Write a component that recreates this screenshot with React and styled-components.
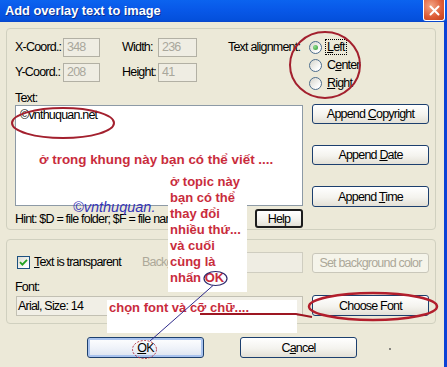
import React from "react";
import styled, { createGlobalStyle } from "styled-components";

const GlobalStyle = createGlobalStyle`
  html, body {
    margin: 0;
    padding: 0;
    background: #ece9d8;
  }
  body {
    font-family: "Liberation Sans", Arial, sans-serif;
  }
`;

const Window = styled.div`
  position: relative;
  width: 447px;
  height: 367px;
  overflow: hidden;
  background: #ece9d8;
  display: flex;
  flex-direction: column;
  font-size: 12.5px;
  letter-spacing: -0.8px;
  color: #000;
`;

const TitleBar = styled.div`
  height: 22px;
  flex-shrink: 0;
  display: flex;
  align-items: flex-start;
  justify-content: space-between;
  padding-left: 5px;
  background: linear-gradient(#0b63ef 0%, #0858e8 45%, #0450dc 90%, #0a46c8 100%);
`;

const TitleText = styled.div`
  font: bold 12.8px "Liberation Sans", Arial, sans-serif;
  letter-spacing: 0;
  line-height: 21px;
  color: #fff;
  text-shadow: 1px 1px 0 #0a2f8f;
`;

const CloseButton = styled.div`
  box-sizing: border-box;
  width: 22px;
  height: 21px;
  margin-right: 2px;
  border: 1px solid #fff;
  border-top: none;
  border-radius: 0 0 3px 3px;
  background: radial-gradient(circle at 35% 30%, #f3a585, #dd5a34 60%, #c1401c);
  display: flex;
  align-items: center;
  justify-content: center;
`;

const Body = styled.div`
  flex: 1;
  padding: 6px 8px 0 6px;
  border-right: 3px solid #0b42d6;
`;

const Group = styled.div`
  border: 1px solid #d0d0bf;
  border-radius: 4px;
  padding: ${(p) => p.$pad};
  margin-top: ${(p) => p.$top || 0}px;
`;

const TopSection = styled.div`
  display: flex;
  height: 54px;
`;

const FieldColumn = styled.div`
  width: 182px;
  display: flex;
  flex-direction: column;
  gap: 6px;
`;

const FieldRow = styled.div`
  display: flex;
  align-items: center;
  height: 19px;
`;

const Label = styled.span`
  display: inline-block;
  width: ${(p) => (p.$w ? `${p.$w}px` : "auto")};
  margin-left: ${(p) => p.$ml || 0}px;
  color: ${(p) => (p.$muted ? "#aca899" : "#000")};
  line-height: 19px;
  white-space: nowrap;
  flex-shrink: 0;
`;

const CoordInput = styled.div`
  box-sizing: border-box;
  width: ${(p) => p.$w}px;
  height: 19px;
  border: 1px solid #b2b0a4;
  background: #efede3;
  color: #a9a79c;
  padding-left: 3px;
  line-height: 17px;
`;

const AlignLabel = styled.div`
  width: 81px;
  margin-left: 31px;
  line-height: 19px;
  white-space: nowrap;
`;

const RadioGroup = styled.div`
  display: flex;
  flex-direction: column;
`;

const RadioRow = styled.div`
  display: flex;
  align-items: center;
  height: 18px;
  gap: 3px;
`;

const RadioCircle = styled.span`
  box-sizing: border-box;
  width: 13px;
  height: 13px;
  border-radius: 50%;
  border: 1px solid #4d6d8c;
  background: linear-gradient(135deg, #d6d5cc, #ffffff 80%);
  display: flex;
  align-items: center;
  justify-content: center;
  &::after {
    content: "";
    display: ${(p) => (p.$checked ? "block" : "none")};
    width: 5px;
    height: 5px;
    border-radius: 50%;
    background: radial-gradient(circle at 35% 35%, #8fdc8f, #2f9a2f);
  }
`;

const RadioText = styled.span`
  padding: 0 1px;
  border: 1px dotted ${(p) => (p.$focus ? "#000" : "transparent")};
  line-height: 14px;
`;

const TextLabel = styled.div`
  line-height: 13px;
  height: 13px;
`;

const MainGrid = styled.div`
  display: grid;
  grid-template-columns: 288px 117px;
  column-gap: 9px;
`;

const TextArea = styled.div`
  box-sizing: border-box;
  height: 101px;
  border: 1px solid #8d9aa6;
  background: #fff;
  padding: 2px 4px;
  line-height: 14px;
`;

const HintRow = styled.div`
  display: flex;
  align-items: center;
  justify-content: space-between;
  margin-top: 3px;
  height: 19px;
  white-space: nowrap;
`;

const ButtonColumn = styled.div`
  display: flex;
  flex-direction: column;
  gap: 21px;
  margin-top: -1px;
`;

const Button = styled.button`
  box-sizing: border-box;
  width: ${(p) => p.$w || 117}px;
  height: ${(p) => p.$h || 20}px;
  margin-top: ${(p) => p.$mt || 0}px;
  align-self: ${(p) => p.$align || "auto"};
  padding: 0;
  font: inherit;
  letter-spacing: inherit;
  color: ${(p) => (p.disabled ? "#aca899" : "#000")};
  border: ${(p) => (p.$focus ? "2px solid #1d1d1d" : p.disabled ? "1px solid #c9c7ba" : "1px solid #1c3f6e")};
  border-radius: 3px;
  background: ${(p) =>
    p.disabled
      ? "#f5f4ea"
      : p.$default
      ? "linear-gradient(#ffffff, #eef2f9 55%, #dbe3ef)"
      : "linear-gradient(#ffffff, #f4f3ee 55%, #e3e0d6)"};
  box-shadow: ${(p) => (p.$default ? "inset 0 0 0 2px #a9c3ee" : "none")};
  cursor: default;
`;

const CheckRow = styled.div`
  display: flex;
  align-items: center;
  height: 21px;
`;

const CheckBox = styled.span`
  box-sizing: border-box;
  width: 13px;
  height: 13px;
  margin-left: 2px;
  margin-right: 4px;
  border: 1px solid #1c5180;
  background: linear-gradient(135deg, #dcdbd2, #ffffff 85%);
  display: flex;
  align-items: center;
  justify-content: center;
  flex-shrink: 0;
`;

const BgInput = styled.div`
  box-sizing: border-box;
  flex: 1;
  height: 21px;
  margin-left: 8px;
  border: 1px solid #cfcdc0;
  background: #efede3;
`;

const FontField = styled.div`
  display: flex;
  flex-direction: column;
`;

const FontLabel = styled.div`
  margin-top: 8px;
  line-height: 13px;
`;

const FontInput = styled.div`
  box-sizing: border-box;
  height: 20px;
  margin-top: 2px;
  margin-left: 1px;
  border: 1px solid #c2c0b3;
  background: #f1efe6;
  padding-left: 1px;
  line-height: 18px;
`;

const Footer = styled.div`
  display: flex;
  gap: 36px;
  margin-top: 13px;
  padding-left: 81px;
`;

const Overlay = styled.svg`
  position: absolute;
  left: 0;
  top: 0;
  pointer-events: none;
`;

const NoteText = styled.div`
  position: absolute;
  left: ${(p) => p.$x}px;
  top: ${(p) => p.$y}px;
  font: bold 13.4px "Liberation Sans", Arial, sans-serif;
  letter-spacing: 0;
  line-height: 18px;
  color: #c92c3c;
  white-space: nowrap;
`;

const Watermark = styled.div`
  position: absolute;
  left: 73px;
  top: 198px;
  font: italic 14.5px "Liberation Sans", Arial, sans-serif;
  letter-spacing: 0;
  line-height: 18px;
  color: #3434b8;
  white-space: nowrap;
`;

const NoteBox = styled.div`
  position: absolute;
  left: ${(p) => p.$x}px;
  top: ${(p) => p.$y}px;
  width: ${(p) => p.$w}px;
  height: ${(p) => p.$h}px;
  box-sizing: border-box;
  padding-left: 2px;
  background: #fff;
  font: bold 13px "Liberation Sans", Arial, sans-serif;
  letter-spacing: 0;
  line-height: 16px;
  color: #c92c3c;
  white-space: nowrap;
`;

export default function App() {
  return (
    <>
      <GlobalStyle />
      <Window>
        <TitleBar>
          <TitleText>Add overlay text to image</TitleText>
          <CloseButton>
            <svg width="11" height="11" viewBox="0 0 11 11">
              <path d="M1.5 1.5 L9.5 9.5 M9.5 1.5 L1.5 9.5" stroke="#fff" strokeWidth="2" strokeLinecap="round" />
            </svg>
          </CloseButton>
        </TitleBar>

        <Body>
          <Group $pad="9px 6px 1px 8px">
            <TopSection>
              <FieldColumn>
                <FieldRow>
                  <Label $w={48}>X-Coord.:</Label>
                  <CoordInput $w={37}>348</CoordInput>
                  <Label $w={36} $ml={22}>Width:</Label>
                  <CoordInput $w={39}>236</CoordInput>
                </FieldRow>
                <FieldRow>
                  <Label $w={48}>Y-Coord.:</Label>
                  <CoordInput $w={37}>208</CoordInput>
                  <Label $w={36} $ml={22}>Height:</Label>
                  <CoordInput $w={39}>41</CoordInput>
                </FieldRow>
              </FieldColumn>
              <AlignLabel>Text alignment:</AlignLabel>
              <RadioGroup>
                <RadioRow>
                  <RadioCircle $checked />
                  <RadioText $focus><u>L</u>eft</RadioText>
                </RadioRow>
                <RadioRow>
                  <RadioCircle />
                  <RadioText>C<u>e</u>nter</RadioText>
                </RadioRow>
                <RadioRow>
                  <RadioCircle />
                  <RadioText><u>R</u>ight</RadioText>
                </RadioRow>
              </RadioGroup>
            </TopSection>
            <TextLabel>Text:</TextLabel>
            <MainGrid>
              <div>
                <TextArea>©vnthuquan.net</TextArea>
                <HintRow>
                  <span>Hint: $D = file folder; $F = file name</span>
                  <Button $w={48} $h={19} $focus>Help</Button>
                </HintRow>
              </div>
              <ButtonColumn>
                <Button>Append <u>C</u>opyright</Button>
                <Button>Append <u>D</u>ate</Button>
                <Button $h={21}>Append <u>T</u>ime</Button>
              </ButtonColumn>
            </MainGrid>
          </Group>

          <Group $top={9} $pad="12px 6px 7px 8px">
            <MainGrid>
              <CheckRow>
                <CheckBox>
                  <svg width="9" height="9" viewBox="0 0 9 9">
                    <path d="M1 4.2 L3.4 6.6 L8 1.8" stroke="#21a121" strokeWidth="1.8" fill="none" />
                  </svg>
                </CheckBox>
                <Label><u>T</u>ext is transparent</Label>
                <Label $ml={21} $muted>Background:</Label>
                <BgInput />
              </CheckRow>
              <Button disabled $mt={1}>Set background color</Button>
              <FontField>
                <FontLabel>Font:</FontLabel>
                <FontInput>Arial, Size: 14</FontInput>
              </FontField>
              <Button $h={21} $align="end">Choose Font</Button>
            </MainGrid>
          </Group>

          <Footer>
            <Button $h={21} $default><u>O</u>K</Button>
            <Button $h={21}>C<u>a</u>ncel</Button>
          </Footer>
        </Body>

        <NoteText $x={39} $y={151}>ở trong khung này bạn có thể viết ....</NoteText>
        <Watermark>©vnthuquan.</Watermark>
        <NoteBox $x={168} $y={174} $w={79} $h={118}>
          ở topic này<br />
          bạn có thể<br />
          thay đổi<br />
          nhiều thứ...<br />
          và cuối<br />
          cùng là<br />
          nhấn OK
        </NoteBox>
        <NoteBox $x={107} $y={300} $w={190} $h={33}>
          chọn font và cỡ chữ....
        </NoteBox>

        <Overlay width="447" height="367" viewBox="0 0 447 367">
          <ellipse cx="325" cy="65" rx="35" ry="33" fill="none" stroke="#a3202e" strokeWidth="2" />
          <ellipse cx="63" cy="123" rx="51" ry="15" fill="none" stroke="#a3202e" strokeWidth="2" />
          <ellipse cx="215.5" cy="278.5" rx="11.5" ry="7" fill="none" stroke="#2e2a6e" strokeWidth="1.2" />
          <line x1="213" y1="285.5" x2="150" y2="341" stroke="#2e2a8a" strokeWidth="1" />
          <polyline points="200,314 296,314 312,317" fill="none" stroke="#9d1622" strokeWidth="2" />
          <ellipse cx="373" cy="306.5" rx="64" ry="13.5" fill="none" stroke="#b21e2c" strokeWidth="2.5" />
          <ellipse cx="144.5" cy="349.5" rx="12" ry="9" fill="none" stroke="#b23040" strokeWidth="1" strokeDasharray="2 1.5" />
          <circle cx="390" cy="349" r="0.9" fill="#555" />
        </Overlay>
      </Window>
    </>
  );
}
